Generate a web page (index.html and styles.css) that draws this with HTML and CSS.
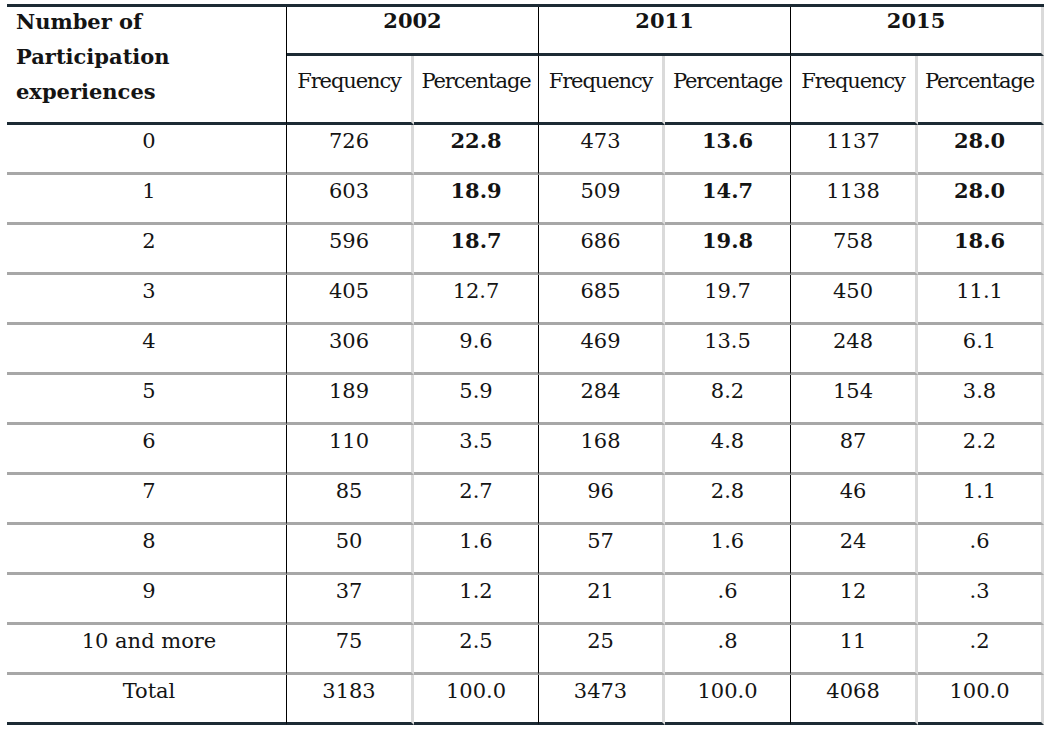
FILE: index.html
```html
<!DOCTYPE html>
<html>
<head>
<meta charset="utf-8">
<link rel="stylesheet" href="styles.css">
</head>
<body>
<table class="freq-table">
  <colgroup>
    <col class="c-label">
    <col class="c-a"><col class="c-b">
    <col class="c-c"><col class="c-d">
    <col class="c-e"><col class="c-f">
  </colgroup>
  <thead>
    <tr class="year-row">
      <th class="label-head" rowspan="2"><div class="label-text">Number of<br>Participation<br>experiences</div></th>
      <th class="year grp-end" colspan="2">2002</th>
      <th class="year grp-end" colspan="2">2011</th>
      <th class="year last" colspan="2">2015</th>
    </tr>
    <tr class="sub-row">
      <th class="sub sub-split">Frequency</th>
      <th class="sub grp-end">Percentage</th>
      <th class="sub sub-split">Frequency</th>
      <th class="sub grp-end">Percentage</th>
      <th class="sub sub-split">Frequency</th>
      <th class="sub last">Percentage</th>
    </tr>
  </thead>
  <tbody>
    <tr><td class="lbl">0</td><td class="split">726</td><td class="grp-end strong">22.8</td><td class="split">473</td><td class="grp-end strong">13.6</td><td class="split">1137</td><td class="last strong">28.0</td></tr>
    <tr><td class="lbl">1</td><td class="split">603</td><td class="grp-end strong">18.9</td><td class="split">509</td><td class="grp-end strong">14.7</td><td class="split">1138</td><td class="last strong">28.0</td></tr>
    <tr><td class="lbl">2</td><td class="split">596</td><td class="grp-end strong">18.7</td><td class="split">686</td><td class="grp-end strong">19.8</td><td class="split">758</td><td class="last strong">18.6</td></tr>
    <tr><td class="lbl">3</td><td class="split">405</td><td class="grp-end">12.7</td><td class="split">685</td><td class="grp-end">19.7</td><td class="split">450</td><td class="last">11.1</td></tr>
    <tr><td class="lbl">4</td><td class="split">306</td><td class="grp-end">9.6</td><td class="split">469</td><td class="grp-end">13.5</td><td class="split">248</td><td class="last">6.1</td></tr>
    <tr><td class="lbl">5</td><td class="split">189</td><td class="grp-end">5.9</td><td class="split">284</td><td class="grp-end">8.2</td><td class="split">154</td><td class="last">3.8</td></tr>
    <tr><td class="lbl">6</td><td class="split">110</td><td class="grp-end">3.5</td><td class="split">168</td><td class="grp-end">4.8</td><td class="split">87</td><td class="last">2.2</td></tr>
    <tr><td class="lbl">7</td><td class="split">85</td><td class="grp-end">2.7</td><td class="split">96</td><td class="grp-end">2.8</td><td class="split">46</td><td class="last">1.1</td></tr>
    <tr><td class="lbl">8</td><td class="split">50</td><td class="grp-end">1.6</td><td class="split">57</td><td class="grp-end">1.6</td><td class="split">24</td><td class="last">.6</td></tr>
    <tr><td class="lbl">9</td><td class="split">37</td><td class="grp-end">1.2</td><td class="split">21</td><td class="grp-end">.6</td><td class="split">12</td><td class="last">.3</td></tr>
    <tr><td class="lbl">10 and more</td><td class="split">75</td><td class="grp-end">2.5</td><td class="split">25</td><td class="grp-end">.8</td><td class="split">11</td><td class="last">.2</td></tr>
    <tr class="total-row"><td class="lbl">Total</td><td class="split">3183</td><td class="grp-end">100.0</td><td class="split">3473</td><td class="grp-end">100.0</td><td class="split">4068</td><td class="last">100.0</td></tr>
  </tbody>
</table>
</body>
</html>
```
FILE: styles.css
```css
html, body {
  margin: 0;
  padding: 0;
  background: #ffffff;
}

body {
  padding: 4px 0 0 7px;
  font-family: "DejaVu Serif", "Liberation Serif", serif;
  color: #141414;
}

.freq-table {
  border-collapse: separate;
  border-spacing: 0;
  table-layout: fixed;
  width: 1037px;
  border-top: 3px solid #1c2a34;
  font-size: 21px;
}

.c-label { width: 280px; }
.c-a { width: 127px; }
.c-b { width: 125px; }
.c-c { width: 126px; }
.c-d { width: 126px; }
.c-e { width: 127px; }
.c-f { width: 126px; }

th, td {
  padding: 0;
  box-sizing: border-box;
  vertical-align: top;
  text-align: center;
}

.label-head {
  text-align: left;
  font-weight: bold;
  line-height: 35px;
  padding: 0 0 0 9px;
  border-right: 1px solid #000000;
  border-bottom: 3px solid #1c2a34;
  height: 118px;
}

.label-text {
  margin-top: -3px;
}

.year-row th { height: 49px; }

.year {
  font-weight: bold;
  line-height: 24px;
  padding-top: 2px;
  border-bottom: 3px solid #1c2a34;
}

.sub-row th { height: 69px; }

.sub {
  font-weight: normal;
  line-height: 24px;
  padding-top: 13px;
  letter-spacing: -1.1px;
  border-bottom: 3px solid #1c2a34;
}

td {
  height: 50px;
  line-height: 24px;
  padding-top: 4px;
  border-bottom: 3px solid #a7a7a7;
}

.total-row td {
  border-bottom: 3px solid #1c2a34;
}

.lbl {
  padding-left: 5px;
  border-right: 1px solid #000000;
}
.split, .sub-split { border-right: 3px solid #dadada; }
.grp-end { border-right: 1px solid #000000; }
.last { border-right: 3px solid #dadada; }

.strong { font-weight: bold; }
```
